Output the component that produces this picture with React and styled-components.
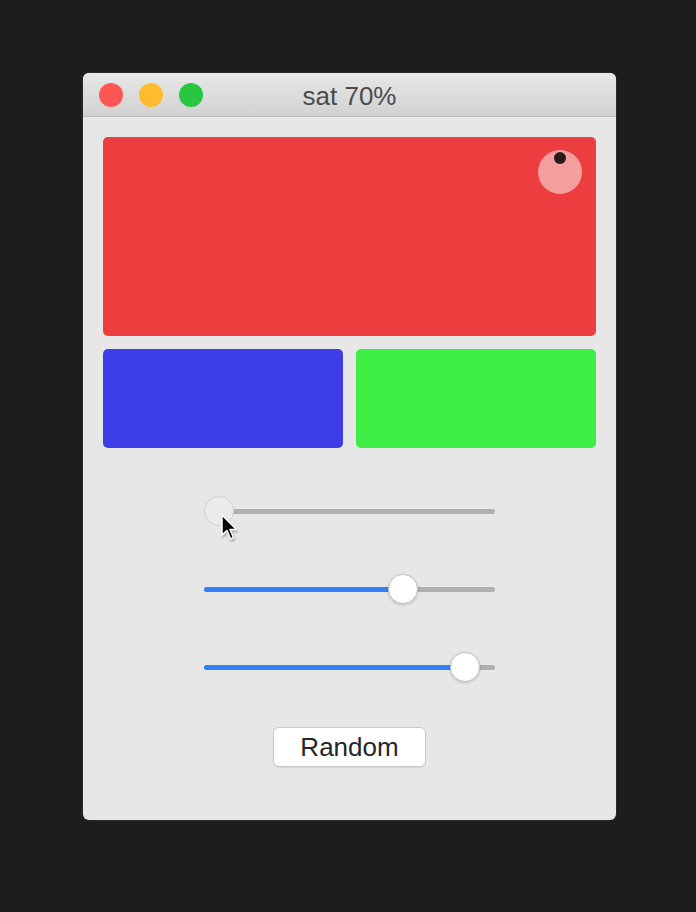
import styled, { createGlobalStyle } from 'styled-components';

const GlobalStyle = createGlobalStyle`
  html, body {
    margin: 0;
    padding: 0;
    background: #1d1d1e;
  }
  body {
    font-family: "Liberation Sans", Arial, sans-serif;
  }
`;

const Page = styled.div`
  min-height: 912px;
  padding: 73px 0 0 83px;
  box-sizing: border-box;
`;

const Window = styled.div`
  width: 533px;
  height: 747px;
  background: #e8e7e8;
  border-radius: 6px;
  overflow: hidden;
  display: flex;
  flex-direction: column;
  box-shadow: 0 0 0 1px #2a2a2a;
`;

const TitleBar = styled.div`
  position: relative;
  height: 43px;
  flex-shrink: 0;
  background: linear-gradient(#e9e8e9, #d2d1d2);
  border-bottom: 1px solid #bdbcbd;
  display: flex;
  align-items: center;
  justify-content: center;
`;

const Lights = styled.div`
  position: absolute;
  left: 16px;
  top: 10px;
  display: flex;
  gap: 16px;
`;

const Light = styled.span`
  width: 24px;
  height: 24px;
  border-radius: 50%;
  background: ${(p) => p.$color};
`;

const Title = styled.div`
  font-size: 26px;
  color: #4b4b4b;
  padding-top: 3px;
`;

const Content = styled.div`
  padding: 20px 20px 0;
  display: flex;
  flex-direction: column;
  align-items: center;
`;

const Swatch = styled.div`
  position: relative;
  width: 100%;
  height: ${(p) => p.$height}px;
  background: ${(p) => p.$color};
  border-radius: 5px;
`;

const SwatchRow = styled.div`
  width: 100%;
  margin-top: 13px;
  display: grid;
  grid-template-columns: 1fr 1fr;
  gap: 13px;
`;

const Knob = styled.div`
  position: absolute;
  right: 14px;
  top: 13px;
  width: 44px;
  height: 44px;
  border-radius: 50%;
  background: #f59e9e;
`;

const KnobDot = styled.div`
  position: absolute;
  left: 16px;
  top: 2px;
  width: 12px;
  height: 12px;
  border-radius: 50%;
  background: #2a1a1a;
`;

const Sliders = styled.div`
  margin-top: 47px;
  display: flex;
  flex-direction: column;
  gap: 46px;
`;

const SliderWrap = styled.div`
  position: relative;
  width: 291px;
  height: 32px;
  display: flex;
  align-items: center;
`;

const Track = styled.div`
  position: relative;
  width: 100%;
  height: 5px;
  border-radius: 3px;
  background: #b0b0b0;
`;

const Fill = styled.div`
  position: absolute;
  left: 0;
  top: 0;
  bottom: 0;
  border-radius: 3px;
  background: #3381f7;
`;

const Thumb = styled.div`
  position: absolute;
  top: 1px;
  width: 30px;
  height: 30px;
  margin-left: -15px;
  border-radius: 50%;
  box-sizing: border-box;
  background: ${(p) => (p.$dim ? '#ebebeb' : '#ffffff')};
  border: 1px solid ${(p) => (p.$dim ? '#cfcfcf' : '#c4c4c4')};
  box-shadow: ${(p) => (p.$dim ? 'none' : '0 1px 3px rgba(0,0,0,0.18)')};
`;

const Cursor = styled.svg`
  position: absolute;
  left: 17px;
  top: 19px;
  filter: drop-shadow(1px 2px 1px rgba(0,0,0,0.25));
`;

const Button = styled.button`
  margin-top: 44px;
  width: 153px;
  height: 40px;
  background: #ffffff;
  border: 1px solid #c9c9c9;
  border-radius: 6px;
  box-shadow: 0 1px 1px rgba(0,0,0,0.08);
  font-family: "Liberation Sans", Arial, sans-serif;
  font-size: 26px;
  color: #262626;
  padding: 0;
`;

const Slider = ({ value, dim, children }) => {
  const thumbX = 15 + value * 261;
  return (
    <SliderWrap>
      <Track>
        {value > 0 && <Fill style={{ width: thumbX }} />}
      </Track>
      <Thumb $dim={dim} style={{ left: thumbX }} />
      {children}
    </SliderWrap>
  );
};

const App = () => (
  <>
    <GlobalStyle />
    <Page>
      <Window>
        <TitleBar>
          <Lights>
            <Light $color="#fc5753" />
            <Light $color="#fdbc2e" />
            <Light $color="#27c83f" />
          </Lights>
          <Title>sat 70%</Title>
        </TitleBar>
        <Content>
          <Swatch $color="#ec3e3e" $height={199}>
            <Knob>
              <KnobDot />
            </Knob>
          </Swatch>
          <SwatchRow>
            <Swatch $color="#3d3de8" $height={99} />
            <Swatch $color="#3eee45" $height={99} />
          </SwatchRow>
          <Sliders>
            <Slider value={0} dim>
              <Cursor width="18" height="28" viewBox="0 0 18 28">
                <path
                  d="M1 1 L1 21 L6 16.5 L9.5 25 L12.5 23.7 L9 15.5 L15.5 15.5 Z"
                  fill="#000"
                  stroke="#fff"
                  strokeWidth="1.5"
                  strokeLinejoin="round"
                />
              </Cursor>
            </Slider>
            <Slider value={0.705} />
            <Slider value={0.943} />
          </Sliders>
          <Button>Random</Button>
        </Content>
      </Window>
    </Page>
  </>
);

export default App;
